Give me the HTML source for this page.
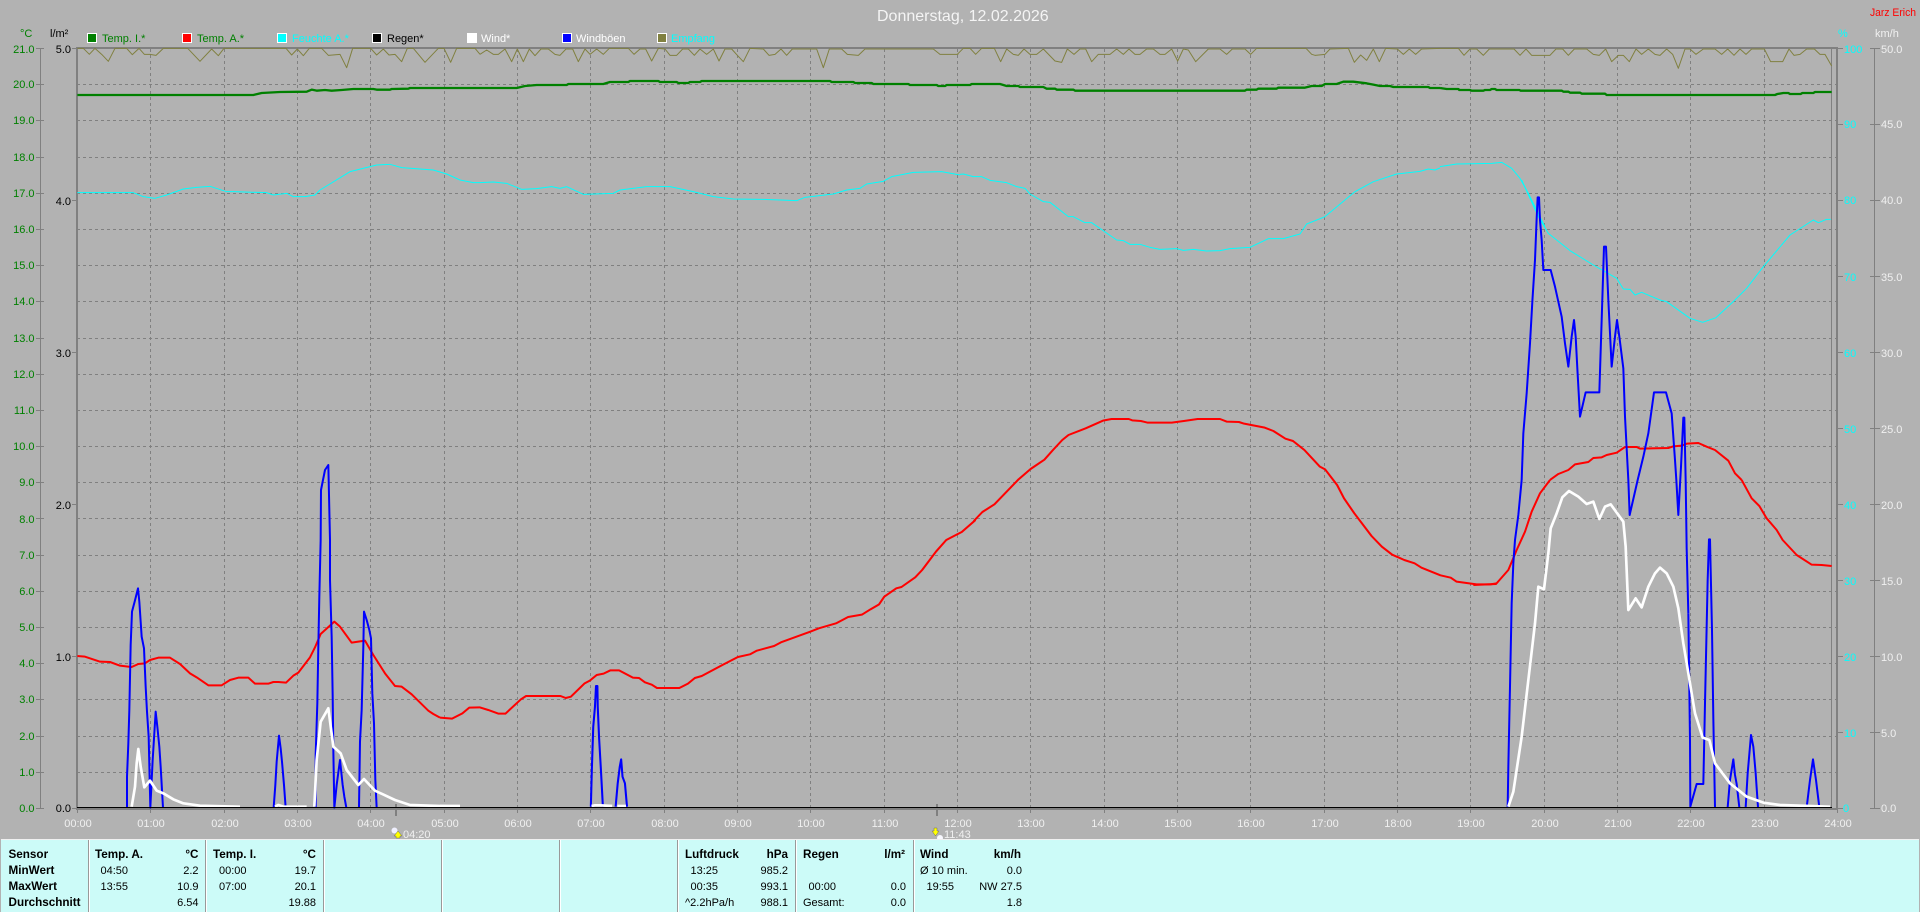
<!DOCTYPE html>
<html lang="de">
<head>
<meta charset="utf-8">
<title>Donnerstag, 12.02.2026</title>
<style>
html,body{margin:0;padding:0;background:#b2b2b2;width:1920px;height:912px;overflow:hidden}
svg{display:block;position:absolute;left:0;top:0}
text{font-family:"Liberation Sans",sans-serif;font-size:11px}
.g text{fill:#008000;text-anchor:end}
.k text{fill:#000;text-anchor:end}
.c text{fill:#00ffff}
.w text{fill:#f0f0f0}
.h text{fill:#f0f0f0;text-anchor:middle}
.p text{fill:#000}
.p .b{font-weight:bold;font-size:11.7px}
.p .e{text-anchor:end}
polyline{fill:none;stroke-linejoin:round}
</style>
</head>
<body>
<svg width="1920" height="912" viewBox="0 0 1920 912" xmlns="http://www.w3.org/2000/svg">
<rect width="1920" height="912" fill="#b2b2b2"/>

<!-- title -->
<text x="877" y="21" style="font-size:16px" fill="#f4f4f4">Donnerstag, 12.02.2026</text>
<text x="1870" y="16" style="font-size:11px" textLength="46" lengthAdjust="spacingAndGlyphs" fill="#ff0000">Jarz Erich</text>

<!-- axis headers -->
<text x="20" y="37" fill="#008000">°C</text>
<text x="50" y="37" fill="#000">l/m²</text>
<text x="1838" y="37" fill="#00ffff">%</text>
<text x="1875" y="37" fill="#f0f0f0">km/h</text>

<!-- legend -->
<g stroke="#fff" stroke-width="1" shape-rendering="crispEdges">
<rect x="87.5" y="33.5" width="9" height="9" fill="#008000"/>
<rect x="182.5" y="33.5" width="9" height="9" fill="#ff0000"/>
<rect x="277.5" y="33.5" width="9" height="9" fill="#00ffff"/>
<rect x="372.5" y="33.5" width="9" height="9" fill="#000"/>
<rect x="467.5" y="33.5" width="9" height="9" fill="#fff"/>
<rect x="562.5" y="33.5" width="9" height="9" fill="#0000ff"/>
<rect x="657.5" y="33.5" width="9" height="9" fill="#808040"/>
</g>
<text x="102" y="42" fill="#008000">Temp. I.*</text>
<text x="197" y="42" fill="#008000">Temp. A.*</text>
<text x="292" y="42" fill="#00ffff">Feuchte A.*</text>
<text x="387" y="42" fill="#000">Regen*</text>
<text x="481" y="42" fill="#fff">Wind*</text>
<text x="576" y="42" fill="#fff">Windböen</text>
<text x="671" y="42" fill="#00ffff">Empfang</text>

<!-- grid -->
<path shape-rendering="crispEdges" fill="none" stroke="#808080" stroke-width="1" stroke-dasharray="3 3"
 d="M77 84.5H1837M77 120.5H1837M77 157.5H1837M77 193.5H1837M77 229.5H1837M77 265.5H1837M77 301.5H1837M77 338.5H1837M77 374.5H1837M77 410.5H1837M77 446.5H1837M77 482.5H1837M77 518.5H1837M77 555.5H1837M77 591.5H1837M77 627.5H1837M77 663.5H1837M77 699.5H1837M77 736.5H1837M77 772.5H1837
 M150.5 49V808M224.5 49V808M297.5 49V808M370.5 49V808M444.5 49V808M517.5 49V808M590.5 49V808M664.5 49V808M737.5 49V808M810.5 49V808M884.5 49V808M957.5 49V808M1030.5 49V808M1104.5 49V808M1177.5 49V808M1250.5 49V808M1324.5 49V808M1397.5 49V808M1470.5 49V808M1544.5 49V808M1617.5 49V808M1690.5 49V808M1764.5 49V808"/>

<!-- frame and axes -->
<g shape-rendering="crispEdges" fill="#808080">
<rect x="76" y="47" width="1762" height="2"/>
<rect x="76" y="47" width="2" height="763"/>
<rect x="1836" y="47" width="2" height="763"/>
<rect x="1831" y="48" width="1" height="760"/>
<rect x="76" y="808" width="1762" height="2"/>
<rect x="40" y="48" width="1" height="761"/>
<rect x="1874" y="48" width="1" height="761"/>
<rect x="395" y="804" width="2" height="12"/>
<rect x="936" y="804" width="2" height="12"/>
</g>
<path shape-rendering="crispEdges" fill="none" stroke="#808080" stroke-width="1"
 d="M36 48.5H44M36 84.5H44M36 120.5H44M36 157.5H44M36 193.5H44M36 229.5H44M36 265.5H44M36 301.5H44M36 338.5H44M36 374.5H44M36 410.5H44M36 446.5H44M36 482.5H44M36 518.5H44M36 555.5H44M36 591.5H44M36 627.5H44M36 663.5H44M36 699.5H44M36 736.5H44M36 772.5H44M36 808.5H44
 M72 48.5H77M72 200.5H77M72 352.5H77M72 504.5H77M72 656.5H77M72 808.5H77
 M1838 48.5H1843M1838 124.5H1843M1838 200.5H1843M1838 276.5H1843M1838 352.5H1843M1838 428.5H1843M1838 504.5H1843M1838 580.5H1843M1838 656.5H1843M1838 732.5H1843M1838 808.5H1843
 M1870 48.5H1880M1870 124.5H1880M1870 200.5H1880M1870 276.5H1880M1870 352.5H1880M1870 428.5H1880M1870 504.5H1880M1870 580.5H1880M1870 656.5H1880M1870 732.5H1880M1870 808.5H1880
 M77.5 808V813M150.5 808V813M224.5 808V813M297.5 808V813M370.5 808V813M444.5 808V813M517.5 808V813M590.5 808V813M664.5 808V813M737.5 808V813M810.5 808V813M884.5 808V813M957.5 808V813M1030.5 808V813M1104.5 808V813M1177.5 808V813M1250.5 808V813M1324.5 808V813M1397.5 808V813M1470.5 808V813M1544.5 808V813M1617.5 808V813M1690.5 808V813M1764.5 808V813M1837.5 808V813"/>

<!-- Temperature axis labels -->
<g class="g">
<text x="34.5" y="53">21.0</text><text x="34.5" y="88">20.0</text><text x="34.5" y="124">19.0</text><text x="34.5" y="161">18.0</text><text x="34.5" y="197">17.0</text><text x="34.5" y="233">16.0</text><text x="34.5" y="269">15.0</text><text x="34.5" y="305">14.0</text><text x="34.5" y="342">13.0</text><text x="34.5" y="378">12.0</text><text x="34.5" y="414">11.0</text><text x="34.5" y="450">10.0</text><text x="34.5" y="486">9.0</text><text x="34.5" y="523">8.0</text><text x="34.5" y="559">7.0</text><text x="34.5" y="595">6.0</text><text x="34.5" y="631">5.0</text><text x="34.5" y="667">4.0</text><text x="34.5" y="703">3.0</text><text x="34.5" y="740">2.0</text><text x="34.5" y="776">1.0</text><text x="34.5" y="812">0.0</text>
</g>
<g class="k">
<text x="71" y="53">5.0</text><text x="71" y="205">4.0</text><text x="71" y="357">3.0</text><text x="71" y="509">2.0</text><text x="71" y="661">1.0</text><text x="71" y="812">0.0</text>
</g>
<g class="c">
<text x="1844" y="53">100</text><text x="1844" y="128">90</text><text x="1844" y="204">80</text><text x="1844" y="281">70</text><text x="1844" y="357">60</text><text x="1844" y="433">50</text><text x="1844" y="509">40</text><text x="1844" y="585">30</text><text x="1844" y="661">20</text><text x="1844" y="737">10</text><text x="1843" y="812">0</text>
</g>
<g class="w">
<text x="1881" y="53">50.0</text><text x="1881" y="128">45.0</text><text x="1881" y="204">40.0</text><text x="1881" y="281">35.0</text><text x="1881" y="357">30.0</text><text x="1881" y="433">25.0</text><text x="1881" y="509">20.0</text><text x="1881" y="585">15.0</text><text x="1881" y="661">10.0</text><text x="1881" y="737">5.0</text><text x="1881" y="812">0.0</text>
</g>

<!-- Hour labels -->
<g class="h">
<text x="78" y="827">00:00</text><text x="151" y="827">01:00</text><text x="225" y="827">02:00</text><text x="298" y="827">03:00</text><text x="371" y="827">04:00</text><text x="445" y="827">05:00</text><text x="518" y="827">06:00</text><text x="591" y="827">07:00</text><text x="665" y="827">08:00</text><text x="738" y="827">09:00</text><text x="811" y="827">10:00</text><text x="885" y="827">11:00</text><text x="958" y="827">12:00</text><text x="1031" y="827">13:00</text><text x="1105" y="827">14:00</text><text x="1178" y="827">15:00</text><text x="1251" y="827">16:00</text><text x="1325" y="827">17:00</text><text x="1398" y="827">18:00</text><text x="1471" y="827">19:00</text><text x="1545" y="827">20:00</text><text x="1618" y="827">21:00</text><text x="1691" y="827">22:00</text><text x="1765" y="827">23:00</text><text x="1838" y="827">24:00</text>
</g>

<!-- Empfang (olive) -->
<g stroke="#808040" stroke-width="3">
<polyline transform="scale(.33333)" points="232,145 250,145 268,163 285,145 305,163 325,184 345,145 380,145 397,164 417,145 433,163 450,163 468,166 490,145 563,145 600,184 635,147 655,167 672,145 858,145 875,165 892,147 910,167 928,145 965,145 985,166 1020,163 1040,203 1058,145 1112,145 1130,165 1150,147 1167,165 1185,163 1205,185 1222,145 1240,145 1275,187 1315,145 1332,145 1352,187 1370,145 1425,145 1440,163"/>
<polyline transform="translate(480,0) scale(.33333)" points="0,163 20,150 40,163 55,163 75,147 95,185 112,147 130,185 148,147 165,167 183,147 205,147 225,163 240,166 258,147 278,147 295,185 315,147 330,163 350,147 370,163 388,145 445,145 462,163 480,147 497,147 515,183 535,145 555,147 570,166 590,166 608,147 625,147 643,166 660,147 680,163 700,147 717,183 735,147 755,147 772,166 790,185 810,145 850,147 867,166 885,163 903,147 920,166 937,147 1010,147 1030,203 1048,147 1085,147 1102,163 1135,166 1155,147 1360,147 1380,163 1435,163"/>
<polyline transform="translate(950,0) scale(.33333)" points="22,163 40,145 60,145 77,163 95,145 133,145 152,185 170,147 190,163 205,166 222,147 240,163 260,163 280,147 315,183 335,187 352,147 372,163 390,147 407,147 425,185 445,163 480,163 500,147 520,163 537,147 555,163 570,163 590,147 610,147 630,163 645,163 665,147 683,183 700,147 715,150 737,185 775,147 810,147 830,163 847,147 885,147 902,163 920,145 1068,145 1085,163 1095,166 1125,163 1140,147 1195,145 1213,187 1232,165 1250,181 1270,147 1288,185 1307,145 1342,147 1360,163 1378,147 1397,163 1415,147 1470,145"/>
<polyline transform="translate(1440,0) scale(.33333)" points="0,145 55,145 72,166 90,147 110,147 130,166 148,147 222,147 240,166 258,147 275,166 320,166 330,166 348,147 368,147 385,166 403,147 440,147 460,163 478,166 497,147 515,185 535,166 550,166 568,185 588,147 605,163 625,147 645,163 660,166 680,147 698,163 715,205 735,147 750,147 768,163 790,147 825,147 845,163 863,147 882,166 900,147 918,163 935,147 973,147 992,185 1028,185 1047,147 1062,166 1080,163 1100,147 1123,147 1140,163 1155,163 1175,198"/>
</g>

<!-- Temp I (green) -->
<g stroke="#008000" stroke-width="7">
<polyline transform="scale(.33333)" points="232,285 760,285 785,279 840,276 920,275 935,269 950,272 975,270 995,272 1025,270 1060,267 1120,267 1130,269 1170,269 1175,267 1225,266 1230,264 1440,264"/>
<polyline transform="translate(480,0) scale(.33333)" points="0,264 110,264 135,258 170,255 260,255 265,252 370,252 390,246 445,246 450,243 535,243 540,246 590,246 595,249 625,249 630,246 660,246 665,243 1050,243 1055,246 1120,246 1125,249 1175,249 1180,252 1285,252 1290,255 1370,255 1375,258 1395,258 1400,255 1440,255"/>
<polyline transform="translate(950,0) scale(.33333)" points="30,255 60,255 65,252 150,252 170,258 205,258 210,261 280,261 290,266 315,266 320,269 370,269 375,272 885,272 890,269 920,269 925,266 980,266 985,263 1065,263 1085,258 1115,258 1125,252 1160,252 1180,245 1210,245 1250,250 1270,254 1290,258 1320,258 1330,261 1435,261 1440,264 1470,264"/>
<polyline transform="translate(1440,0) scale(.33333)" points="0,264 20,267 55,267 58,270 90,270 95,272 130,272 135,270 150,270 155,267 165,267 170,270 238,270 242,272 365,272 370,275 385,275 390,278 420,278 425,281 495,281 500,285 1005,285 1012,282 1030,279 1045,279 1050,282 1082,282 1087,279 1120,279 1125,276 1175,276"/>
</g>

<!-- Feuchte (cyan) -->
<g stroke="#00ffff" stroke-width="3">
<polyline transform="scale(.33333)" points="232,578 400,578 430,590 465,595 500,585 550,567 590,562 630,559 680,575 700,575 800,578 820,585 860,580 880,590 915,590 945,585 960,570 1050,515 1130,495 1170,493 1205,503 1300,510 1340,522 1380,540 1420,548 1440,548"/>
<polyline transform="translate(480,0) scale(.33333)" points="0,548 40,546 80,550 125,568 170,566 215,560 240,565 260,560 310,583 400,580 420,570 500,560 570,560 640,575 700,590 760,597 850,598 950,602 975,592 1060,582 1100,570 1140,565 1160,552 1210,544 1235,530 1300,517 1385,515 1440,525"/>
<polyline transform="translate(950,0) scale(.33333)" points="30,523 40,522 70,530 95,530 120,541 170,548 200,560 225,565 240,582 280,605 300,607 355,650 370,650 405,668 425,668 500,720 520,722 540,733 570,733 600,742 630,748 680,746 700,751 730,748 770,753 810,752 840,746 900,742 955,716 1000,716 1050,702 1070,672 1125,650 1215,575 1270,545 1340,522 1410,514 1435,507 1455,510 1470,504"/>
<polyline transform="translate(1440,0) scale(.33333)" points="0,500 50,492 155,490 185,487 215,505 240,535 265,580 300,650 315,680"/>
<polyline transform="translate(1480,180) scale(.33333)" points="125,0 175,110 205,160 270,212 340,255 410,295 430,327 450,328 465,345 485,337 540,360 560,365 630,415 668,427 708,413 760,365 800,325 850,260 930,165 1000,120 1015,128 1040,118 1052,118"/>
</g>

<!-- Temp A (red) -->
<g stroke="#ff0000" stroke-width="6">
<polyline transform="translate(0,540) scale(.33333)" points="232,348 255,350 300,365 330,366 360,377 395,381 415,372 435,370 450,360 475,353 510,353 540,372 570,400 590,412 625,436 665,436 690,420 715,413 745,413 765,431 805,431 820,426 835,426 858,428 880,407 895,398 930,352 945,322 962,282 1003,245 1020,260 1055,308 1095,302 1120,345 1155,400 1185,438 1205,440 1235,463 1285,512 1300,522 1320,533"/>
<polyline transform="translate(440,520) scale(.34439,.33333)" points="0,593 35,596 65,580 85,563 115,562 140,570 170,581 190,581 235,538 250,528 350,528 365,534 380,530 420,490 435,482 455,465 475,461 495,451 520,451 560,473 578,474 595,487 615,494 630,504 695,504 720,491 740,474 760,468 820,435 865,411 900,403 920,392 970,378 990,367 1075,335 1100,325 1150,310 1185,291 1225,284 1250,268 1275,253 1290,230 1325,205 1340,201 1380,172 1400,150 1440,95 1470,60 1500,44 1515,36 1555,0"/>
<polyline transform="translate(960,400) scale(.34439,.33333)" points="40,363 65,336 100,313 170,238 205,207 245,179 270,150 297,120 315,105 365,85 415,62 440,57 490,57 500,61 525,63 545,68 615,68 650,63 690,57 755,57 775,65 810,66 825,71 885,83 910,93 945,116 967,123 1000,150 1045,200 1060,208 1095,255 1115,295 1145,340 1195,408 1225,440 1255,464 1290,480 1320,490 1340,503 1395,526 1425,533 1442,545 1500,553 1540,553 1558,550"/>
<polyline transform="translate(1480,480) scale(.33333)" points="-20,315 48,312 85,270 110,210 135,155 155,95 180,40 210,0"/>
<polyline transform="translate(1480,180) scale(.33333)" points="210,900 235,882 265,870 285,853 325,846 340,834 365,832 380,825 410,818 435,801 470,801 480,806 565,804 580,799 605,797 620,791 655,789 680,800 705,810 745,842 765,880 785,900"/>
<polyline transform="translate(1480,480) scale(.33333)" points="785,0 815,55 838,78 860,115 890,150 908,180 950,225 995,254 1025,255 1055,258"/>
</g>

<!-- Windboeen (blue) -->
<g stroke="#0000ff" stroke-width="6">
<g transform="translate(0,540) scale(.33333)">
<polyline points="381,803 381,710 385,610 388,510 392,315 396,215 404,185 414,145 418,185 425,290 432,325 437,440 441,515 446,590 451,803 458,660 467,515 472,560 478,620 482,680 489,803"/>
<polyline points="821,803 826,735 830,665 837,587 842,625 846,665 852,735 857,803"/>
<polyline points="947,803 947,645 952,490 955,320 958,170 962,0 963,-150 975,-210 985,-225 990,0 990,120 995,290 998,465 1000,630 1003,803 1010,735 1020,660 1028,735 1033,770 1039,803"/>
<polyline points="1077,803 1080,605 1085,510 1090,320 1092,215 1100,240 1108,270 1113,295 1117,460 1122,550 1126,720 1130,803"/>
</g>
<g transform="translate(440,520) scale(.34439,.33333)">
<polyline points="438,860 441,745 445,620 450,560 453,498 457,498 458,560 462,655 467,745 473,860"/>
<polyline points="510,860 516,790 522,740 526,718 530,770 537,790 543,860"/>
</g>
<polyline transform="translate(1480,480) scale(.33333)" points="83,982 85,860 90,620 95,370 100,250 105,180 115,105 125,0"/>
<polyline transform="translate(1480,180) scale(.33333)" points="125,900 130,760 140,640 150,490 157,365 165,240 170,115 173,52 177,52 180,120 185,180 190,270 212,270 225,320 245,410 255,490 265,560 275,470 282,420 287,470 292,565 300,710 317,637 358,637 365,420 372,200 378,200 385,360 395,560 405,470 411,420 418,470 430,565 435,710 445,900 449,1005 473,900 490,830 505,760 522,637 558,637 575,700 585,840 589,900 595,1005 603,860 610,713 613,713 617,900 620,1105 625,1300"/>
<polyline transform="translate(1480,480) scale(.33333)" points="625,400 630,780 631,980 650,912 670,912 675,670 683,300 687,178 690,178 696,450 700,715 705,982"/>
<polyline transform="translate(1480,480) scale(.33333)" points="743,982 750,900 760,838 765,885 770,912 778,982"/>
<polyline transform="translate(1480,480) scale(.33333)" points="797,982 803,880 813,765 820,800 827,880 834,982"/>
<polyline transform="translate(1480,480) scale(.33333)" points="980,982 990,900 999,838 1008,900 1018,982"/>
</g>

<!-- Wind (white) -->
<g stroke="#ffffff" stroke-width="8">
<g transform="translate(0,540) scale(.33333)">
<polyline points="395,800 405,740 410,670 415,627 422,680 433,742 450,722 470,752 490,760 520,778 550,790 600,797 720,800"/>
<polyline points="825,800 835,795 850,800 920,800"/>
<polyline points="943,800 950,660 962,545 985,505 1000,620 1022,640 1040,690 1075,735 1092,717 1125,752 1185,780 1230,795 1380,800"/>
</g>
<g transform="translate(440,520) scale(.34439,.33333)">
<polyline points="0,858 58,858"/>
<polyline points="440,858 450,856 465,856 500,858"/>
<polyline points="515,858 540,858"/>
</g>
<polyline transform="translate(1480,480) scale(.33333)" points="85,980 100,935 125,770 145,600 165,430 175,320 192,328 205,220 212,145 230,100 247,52 267,33 295,50 320,72 340,65 358,117 375,80 392,73 430,125 437,200 445,390 467,355 485,382 505,320 525,280 540,263 560,280 580,320 595,385 610,490 625,580 645,700 668,773 688,780 705,850 750,910 800,950 850,968 900,975 1050,980"/>
</g>

<!-- baseline -->
<rect x="77" y="807" width="1755" height="1" fill="#000" shape-rendering="crispEdges"/>

<!-- sunrise/sunset -->
<circle cx="394.5" cy="830.5" r="3" fill="#f0f0ff"/>
<path d="M398 831L402 836H400V838H396V836H394Z" fill="#ffff00" stroke="#555" stroke-width=".4"/>
<text x="403" y="838" fill="#f0f0f0">04:20</text>
<path d="M935.5 836L932 831H934V828H937V831H939Z" fill="#ffff00" stroke="#555" stroke-width=".4"/>
<circle cx="940" cy="838" r="3" fill="#f8f8ff"/>
<text x="944" y="838" fill="#f0f0f0">11:43</text>

<!-- bottom panel -->
<rect x="1" y="839" width="1918" height="1" fill="#f0f0f0" shape-rendering="crispEdges"/>
<rect x="1" y="840" width="1918" height="72" fill="#ccfbf8" shape-rendering="crispEdges"/>
<g shape-rendering="crispEdges">
<rect x="88" y="840" width="1" height="72" fill="#999"/><rect x="89" y="840" width="1" height="72" fill="#fff"/>
<rect x="205" y="840" width="1" height="72" fill="#999"/><rect x="206" y="840" width="1" height="72" fill="#fff"/>
<rect x="323" y="840" width="1" height="72" fill="#999"/><rect x="324" y="840" width="1" height="72" fill="#fff"/>
<rect x="441" y="840" width="1" height="72" fill="#999"/><rect x="442" y="840" width="1" height="72" fill="#fff"/>
<rect x="559" y="840" width="1" height="72" fill="#999"/><rect x="560" y="840" width="1" height="72" fill="#fff"/>
<rect x="677" y="840" width="1" height="72" fill="#999"/><rect x="678" y="840" width="1" height="72" fill="#fff"/>
<rect x="795" y="840" width="1" height="72" fill="#999"/><rect x="796" y="840" width="1" height="72" fill="#fff"/>
<rect x="913" y="840" width="1" height="72" fill="#999"/><rect x="914" y="840" width="1" height="72" fill="#fff"/>
</g>
<g class="p">
<text class="b" x="8.5" y="858">Sensor</text>
<text class="b" x="8.5" y="874">MinWert</text>
<text class="b" x="8.5" y="890">MaxWert</text>
<text class="b" x="8.5" y="906">Durchschnitt</text>

<text class="b" x="95" y="858">Temp. A.</text><text class="b e" x="198.5" y="858">°C</text>
<text x="100.5" y="874">04:50</text><text class="e" x="198.5" y="874">2.2</text>
<text x="100.5" y="890">13:55</text><text class="e" x="198.5" y="890">10.9</text>
<text class="e" x="198.5" y="906">6.54</text>

<text class="b" x="213" y="858">Temp. I.</text><text class="b e" x="316" y="858">°C</text>
<text x="219" y="874">00:00</text><text class="e" x="316" y="874">19.7</text>
<text x="219" y="890">07:00</text><text class="e" x="316" y="890">20.1</text>
<text class="e" x="316" y="906">19.88</text>

<text class="b" x="685" y="858">Luftdruck</text><text class="b e" x="788" y="858">hPa</text>
<text x="690.5" y="874">13:25</text><text class="e" x="788" y="874">985.2</text>
<text x="690.5" y="890">00:35</text><text class="e" x="788" y="890">993.1</text>
<text x="685" y="906">^2.2hPa/h</text><text class="e" x="788" y="906">988.1</text>

<text class="b" x="803" y="858">Regen</text><text class="b e" x="905" y="858">l/m²</text>
<text x="808.5" y="890">00:00</text><text class="e" x="906" y="890">0.0</text>
<text x="803" y="906">Gesamt:</text><text class="e" x="906" y="906">0.0</text>

<text class="b" x="920" y="858">Wind</text><text class="b e" x="1021" y="858">km/h</text>
<text x="920" y="874">Ø 10 min.</text><text class="e" x="1022" y="874">0.0</text>
<text x="926.5" y="890">19:55</text><text class="e" x="1022" y="890">NW 27.5</text>
<text class="e" x="1022" y="906">1.8</text>
</g>
</svg>
</body>
</html>
